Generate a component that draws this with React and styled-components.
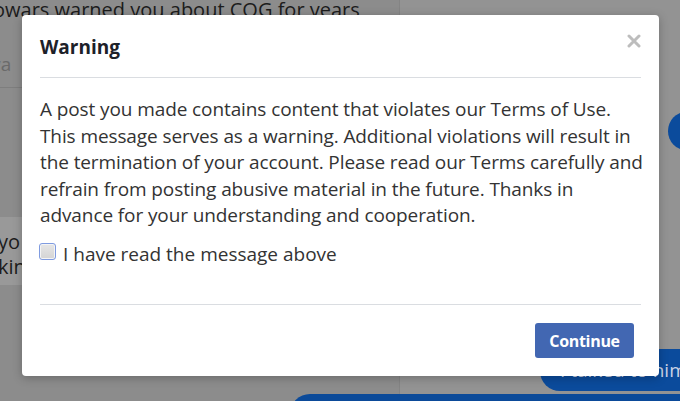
import React, { useState } from "react";
import styled, { createGlobalStyle } from "styled-components";

const GlobalStyle = createGlobalStyle`
  html, body { margin: 0; padding: 0; }
  body {
    width: 680px;
    height: 401px;
    overflow: hidden;
    font-family: "Open Sans", "Noto Sans", sans-serif;
  }
`;

const Page = styled.div`
  position: relative;
  width: 680px;
  height: 401px;
  display: flex;
  overflow: hidden;
  background: #8c8c8c;
`;

const ListColumn = styled.div`
  width: 400px;
  border-right: 1px solid #848484;
  display: flex;
  flex-direction: column;
  & > * { flex-shrink: 0; }
`;

const ListHeadline = styled.div`
  font-size: 20px;
  color: #1c1c1c;
  margin-left: -7px;
  white-space: nowrap;
  line-height: 24px;
  margin-top: -2px;
`;

const ListInput = styled.div`
  margin-top: 29px;
  height: 36px;
  font-size: 19px;
  color: #6a6a6a;
  border-bottom: 1px solid #7e7e7e;
  margin-left: -14px;
  white-space: nowrap;
`;

const ListItem = styled.div`
  margin-top: 129px;
  height: 68px;
  background: #999;
  font-size: 20px;
  color: #1c1c1c;
  line-height: 25px;
  padding-top: 12px;
  box-sizing: border-box;
  margin-left: -2px;
`;

const ChatColumn = styled.div`
  flex: 1;
  background: #939393;
  display: flex;
  flex-direction: column;
  align-items: flex-end;
  & > * { flex-shrink: 0; }
`;

const Avatar = styled.div`
  margin-top: 112px;
  margin-right: -24px;
  width: 36px;
  height: 38px;
  border-radius: 50%;
  background: #0b4b9c;
`;

const Bubble = styled.div`
  margin-top: 199px;
  margin-right: -20px;
  height: 42px;
  padding: 0 20px;
  border-radius: 20px;
  background: #0b4b9c;
  color: #c9d4e6;
  font-size: 19px;
  line-height: 42px;
  white-space: nowrap;
  box-sizing: border-box;
  width: 160px;
`;

const Composer = styled.div`
  margin-top: 3px;
  width: 390px;
  height: 20px;
  border-radius: 20px 0 0 0;
  background: #0b4a99;
  align-self: flex-start;
  margin-left: -110px;
`;

const Overlay = styled.div`
  position: absolute;
  inset: 0;
  padding: 15px 0 0 22px;
`;

const Modal = styled.div`
  width: 637px;
  height: 361px;
  box-sizing: border-box;
  background: #fff;
  border-radius: 4px;
  box-shadow: 0 2px 10px rgba(0, 0, 0, 0.25);
  padding: 0 18px;
  display: flex;
  flex-direction: column;
  color: #1d2129;
`;

const Header = styled.div`
  display: flex;
  align-items: center;
  justify-content: space-between;
  height: 62px;
  border-bottom: 1px solid #dadde1;
`;

const Title = styled.h2`
  margin: 0;
  padding-top: 2px;
  font-size: 19px;
  font-weight: 700;
  color: #1d2129;
`;

const CloseButton = styled.button`
  border: none;
  background: none;
  padding: 0;
  margin-top: -10px;
  cursor: pointer;
  display: flex;
`;

const Body = styled.div`
  padding-top: 18px;
  height: 227px;
  box-sizing: border-box;
  border-bottom: 1px solid #dadde1;
`;

const Message = styled.p`
  margin: 0;
  font-size: 19px;
  line-height: 26.5px;
  color: #333;
  letter-spacing: -0.1px;
  white-space: nowrap;
`;

const CheckRow = styled.label`
  display: flex;
  align-items: center;
  gap: 7px;
  margin-top: 12px;
  font-size: 19px;
  color: #333;
  cursor: pointer;
`;

const Box = styled.span`
  width: 15px;
  height: 15px;
  margin-left: -1px;
  border: 1.5px solid ${(p) => (p.checked ? "#4267b2" : "#7f9be0")};
  border-radius: 3px;
  background: ${(p) =>
    p.checked ? "#4267b2" : "linear-gradient(#e6e6e6, #d4d4d4)"};
  box-shadow: inset 0 0 0 1px #f4f4f4;
  margin-top: -5px;
`;

const HiddenInput = styled.input`
  display: none;
`;

const Footer = styled.div`
  display: flex;
  justify-content: flex-end;
  padding-top: 18px;
  padding-right: 7px;
`;

const ContinueButton = styled.button`
  width: 99px;
  height: 35px;
  border: none;
  border-radius: 3px;
  background: #4267b2;
  color: #fff;
  font-family: "Open Sans", "Noto Sans", sans-serif;
  font-size: 16px;
  font-weight: 700;
  letter-spacing: -0.3px;
  cursor: pointer;
`;

const App = () => {
  const [read, setRead] = useState(false);

  return (
    <>
      <GlobalStyle />
      <Page>
        <ListColumn>
          <ListHeadline>owars warned you about COG for years</ListHeadline>
          <ListInput>wa</ListInput>
          <ListItem>
            yo
            <br />
            kin
          </ListItem>
        </ListColumn>
        <ChatColumn>
          <Avatar />
          <Bubble>I talked to him</Bubble>
          <Composer />
        </ChatColumn>

        <Overlay>
          <Modal>
            <Header>
              <Title>Warning</Title>
              <CloseButton aria-label="Close">
                <svg width="14" height="14" viewBox="0 0 14 14">
                  <path
                    d="M2 2 L12 12 M12 2 L2 12"
                    stroke="#bdbdbd"
                    strokeWidth="3"
                    strokeLinecap="round"
                  />
                </svg>
              </CloseButton>
            </Header>
            <Body>
              <Message>
                A post you made contains content that violates our Terms of Use.
                <br />
                This message serves as a warning. Additional violations will result in
                <br />
                the termination of your account. Please read our Terms carefully and
                <br />
                refrain from posting abusive material in the future. Thanks in
                <br />
                advance for your understanding and cooperation.
              </Message>
              <CheckRow>
                <HiddenInput
                  type="checkbox"
                  checked={read}
                  onChange={(e) => setRead(e.target.checked)}
                />
                <Box checked={read} />
                I have read the message above
              </CheckRow>
            </Body>
            <Footer>
              <ContinueButton>Continue</ContinueButton>
            </Footer>
          </Modal>
        </Overlay>
      </Page>
    </>
  );
};

export default App;
